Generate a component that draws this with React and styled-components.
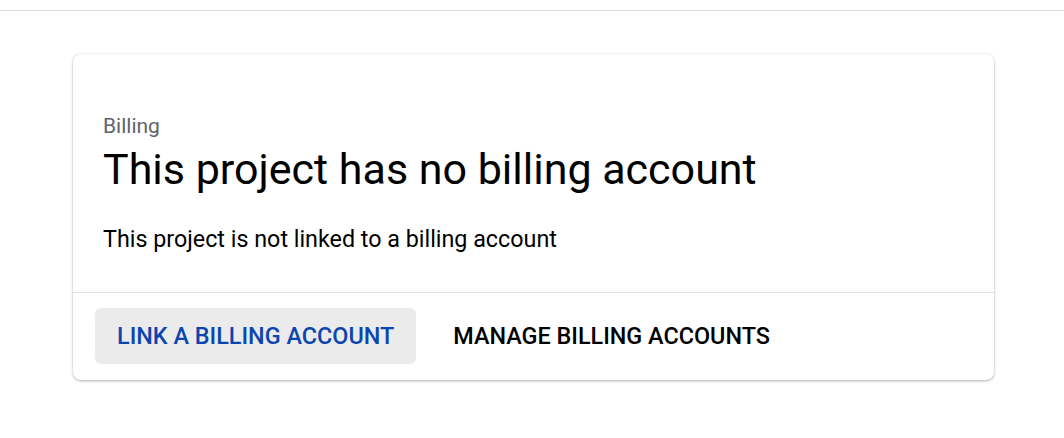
import React from 'react';
import styled, { createGlobalStyle } from 'styled-components';

const GlobalStyle = createGlobalStyle`
  body {
    margin: 0;
    background: #ffffff;
    font-family: Roboto, "Liberation Sans", Arial, sans-serif;
    color: #000000;
  }
`;

const TopBar = styled.div`
  height: 10px;
  border-bottom: 1px solid #dadce0;
`;

const Page = styled.div`
  padding: 43px 70px 40px 73px;
`;

const Card = styled.section`
  width: 921px;
  background: #ffffff;
  border-radius: 8px;
  box-shadow: 0 1px 3px rgba(0, 0, 0, 0.3), 0 0 2px rgba(0, 0, 0, 0.06);
  overflow: hidden;
`;

const Body = styled.div`
  padding: 60px 30px 39px;
`;

const Eyebrow = styled.div`
  font-size: 21px;
  line-height: 24px;
  color: #5f6368;
`;

const Title = styled.h1`
  margin: 5px 0 0;
  font-size: 43px;
  line-height: 52px;
  font-weight: 400;
  color: #000000;
`;

const Text = styled.p`
  margin: 30px 0 0;
  font-size: 23.3px;
  line-height: 28px;
  color: #000000;
`;

const Actions = styled.div`
  display: flex;
  gap: 15px;
  padding: 15px 22px 16px;
  border-top: 1px solid #e2e2e2;
`;

const Button = styled.button`
  height: 56px;
  padding: 0 22px;
  border: none;
  border-radius: 6px;
  background: ${(p) => (p.$primary ? '#ebebeb' : 'transparent')};
  color: ${(p) => (p.$primary ? '#0b46ae' : '#000000')};
  font-family: Roboto, "Liberation Sans", Arial, sans-serif;
  font-size: 23.4px;
  font-weight: 500;
  cursor: pointer;
`;

const App = () => {
  return (
    <>
      <GlobalStyle />
      <TopBar />
      <Page>
        <Card>
          <Body>
            <Eyebrow>Billing</Eyebrow>
            <Title>This project has no billing account</Title>
            <Text>This project is not linked to a billing account</Text>
          </Body>
          <Actions>
            <Button $primary>LINK A BILLING ACCOUNT</Button>
            <Button>MANAGE BILLING ACCOUNTS</Button>
          </Actions>
        </Card>
      </Page>
    </>
  );
};

export default App;
